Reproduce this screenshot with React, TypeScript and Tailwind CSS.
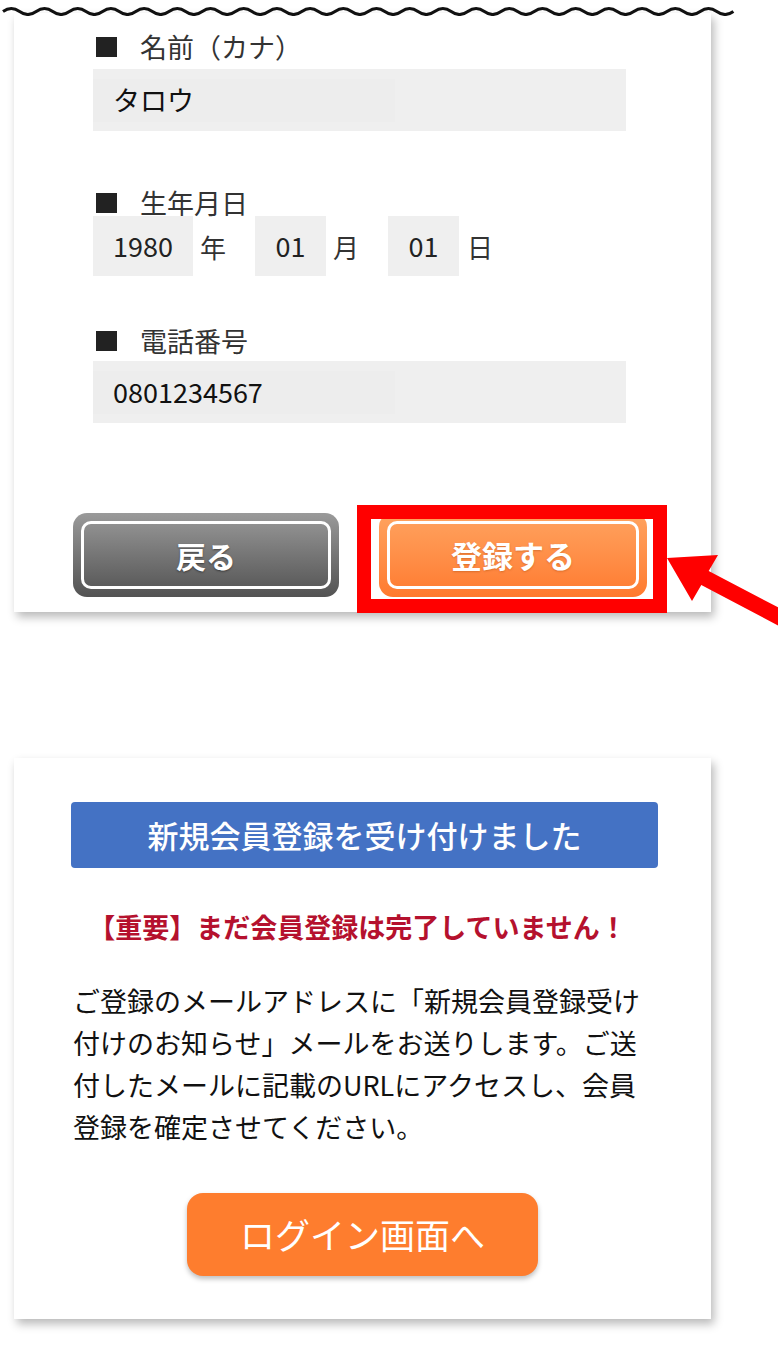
import React from 'react';

const font = "font-['Noto_Sans_CJK_JP','Noto_Sans',sans-serif]";

// wavy "cut" line at the top of the first card
const wavePath = () => {
  let d = 'M3,11.5';
  for (let i = 0; i < 22; i++) {
    d += ' q8.3,-6 16.6,0 q8.3,6 16.6,0';
  }
  return d;
};

function Label({ text }: { text: string }) {
  return (
    <div className="flex items-center h-[26px] pl-[3px] text-[27px] leading-[26px] text-[#333]">
      <span className="w-[21px] h-[20px] bg-[#222]" />
      <span className="ml-[23px]">{text}</span>
    </div>
  );
}

function TextInput({ value }: { value: string }) {
  return (
    <div className="h-[62px] w-[533px] bg-[#efefef] flex items-center">
      <div className="w-[302px] h-[43px] bg-[#ededed] flex items-center pl-[20px] text-[27px] text-[#111]">
        {value}
      </div>
    </div>
  );
}

export default function App() {
  return (
    <div className={`relative w-[778px] min-h-[1346px] bg-white ${font}`}>
      <svg className="relative z-10 block" width="778" height="16" viewBox="0 0 778 16">
        <path d={wavePath()} fill="none" stroke="#111" strokeWidth="3" />
      </svg>

      {/* form card */}
      <div className="-mt-[3px] ml-[14px] w-[697px] bg-white shadow-[3px_5px_9px_rgba(0,0,0,0.28)] pt-[21px] pb-[15px]">
        <div className="ml-[79px] w-[533px]">
          <Label text="名前（カナ）" />
          <div className="mt-[9px]">
            <TextInput value="タロウ" />
          </div>

          <div className="mt-[59px]">
            <Label text="生年月日" />
          </div>
          <div className="flex items-center h-[60px] text-[27px] text-[#222]">
            <div className="w-[100px] h-full bg-[#efefef] flex items-center justify-center">1980</div>
            <span className="ml-[7px] text-[26px] text-[#333]">年</span>
            <div className="ml-[29px] w-[71px] h-full bg-[#efefef] flex items-center justify-center">01</div>
            <span className="ml-[7px] text-[26px] text-[#333]">月</span>
            <div className="ml-[29px] w-[71px] h-full bg-[#efefef] flex items-center justify-center">01</div>
            <span className="ml-[8px] text-[26px] text-[#333]">日</span>
          </div>

          <div className="mt-[52px]">
            <Label text="電話番号" />
          </div>
          <div className="mt-[7px]">
            <TextInput value="0801234567" />
          </div>
        </div>

        <div className="mt-[90px] ml-[59px] flex gap-[40px]">
          <button className="w-[266px] h-[84px] rounded-[14px] bg-gradient-to-b from-[#9a9a9a] to-[#535353] p-[8px]">
            <div className="w-full h-full rounded-[10px] border-[3px] border-white flex items-center justify-center text-white text-[30px] font-bold [text-shadow:0_1px_2px_rgba(0,0,0,0.45)]">
              戻る
            </div>
          </button>
          <div className="relative">
            <button className="w-[268px] h-[84px] rounded-[14px] bg-gradient-to-b from-[#ffa35f] to-[#ff7a2e] p-[8px]">
              <div className="w-full h-full rounded-[10px] border-[3px] border-white flex items-center justify-center text-white text-[31px] font-bold [text-shadow:0_1px_2px_rgba(150,60,0,0.35)]">
                登録する
              </div>
            </button>
            <div className="absolute left-[-22px] top-[-8px] w-[310px] h-[108px] border-[14px] border-[#ff0000]" />
          </div>
        </div>
      </div>

      {/* annotation arrow */}
      <svg className="absolute left-[660px] top-[550px]" width="118" height="90" viewBox="0 0 118 90">
        <polygon
          points="7,8 58,5 48.7,20.9 133.7,65.6 126.3,79.8 41.3,35.1 32,51"
          fill="#ff0000"
        />
      </svg>

      {/* result card */}
      <div className="mt-[146px] ml-[14px] w-[697px] bg-white shadow-[3px_5px_9px_rgba(0,0,0,0.28)] pt-[44px] pb-[43px]">
        <div className="ml-[57px] w-[587px] h-[66px] rounded-[4px] bg-[#4472c4] flex items-center justify-center text-white text-[31px] font-medium">
          新規会員登録を受け付けました
        </div>
        <p className="mt-[41px] text-center text-[27px] leading-[36px] font-bold text-[#b5112e] pr-[10px]">
          【重要】まだ会員登録は完了していません！
        </p>
        <p className="mt-[35px] ml-[59px] w-[580px] text-[27px] leading-[42px] text-[#111]">
          ご登録のメールアドレスに「新規会員登録受け付けのお知らせ」メールをお送りします。ご送付したメールに記載のURLにアクセスし、会員登録を確定させてください。
        </p>
        <div className="mt-[45px] flex justify-center">
          <button className="w-[351px] h-[83px] rounded-[16px] bg-[#fe7d2e] shadow-[0_3px_5px_rgba(0,0,0,0.25)] text-white text-[35px] font-normal">
            ログイン画面へ
          </button>
        </div>
      </div>
    </div>
  );
}
